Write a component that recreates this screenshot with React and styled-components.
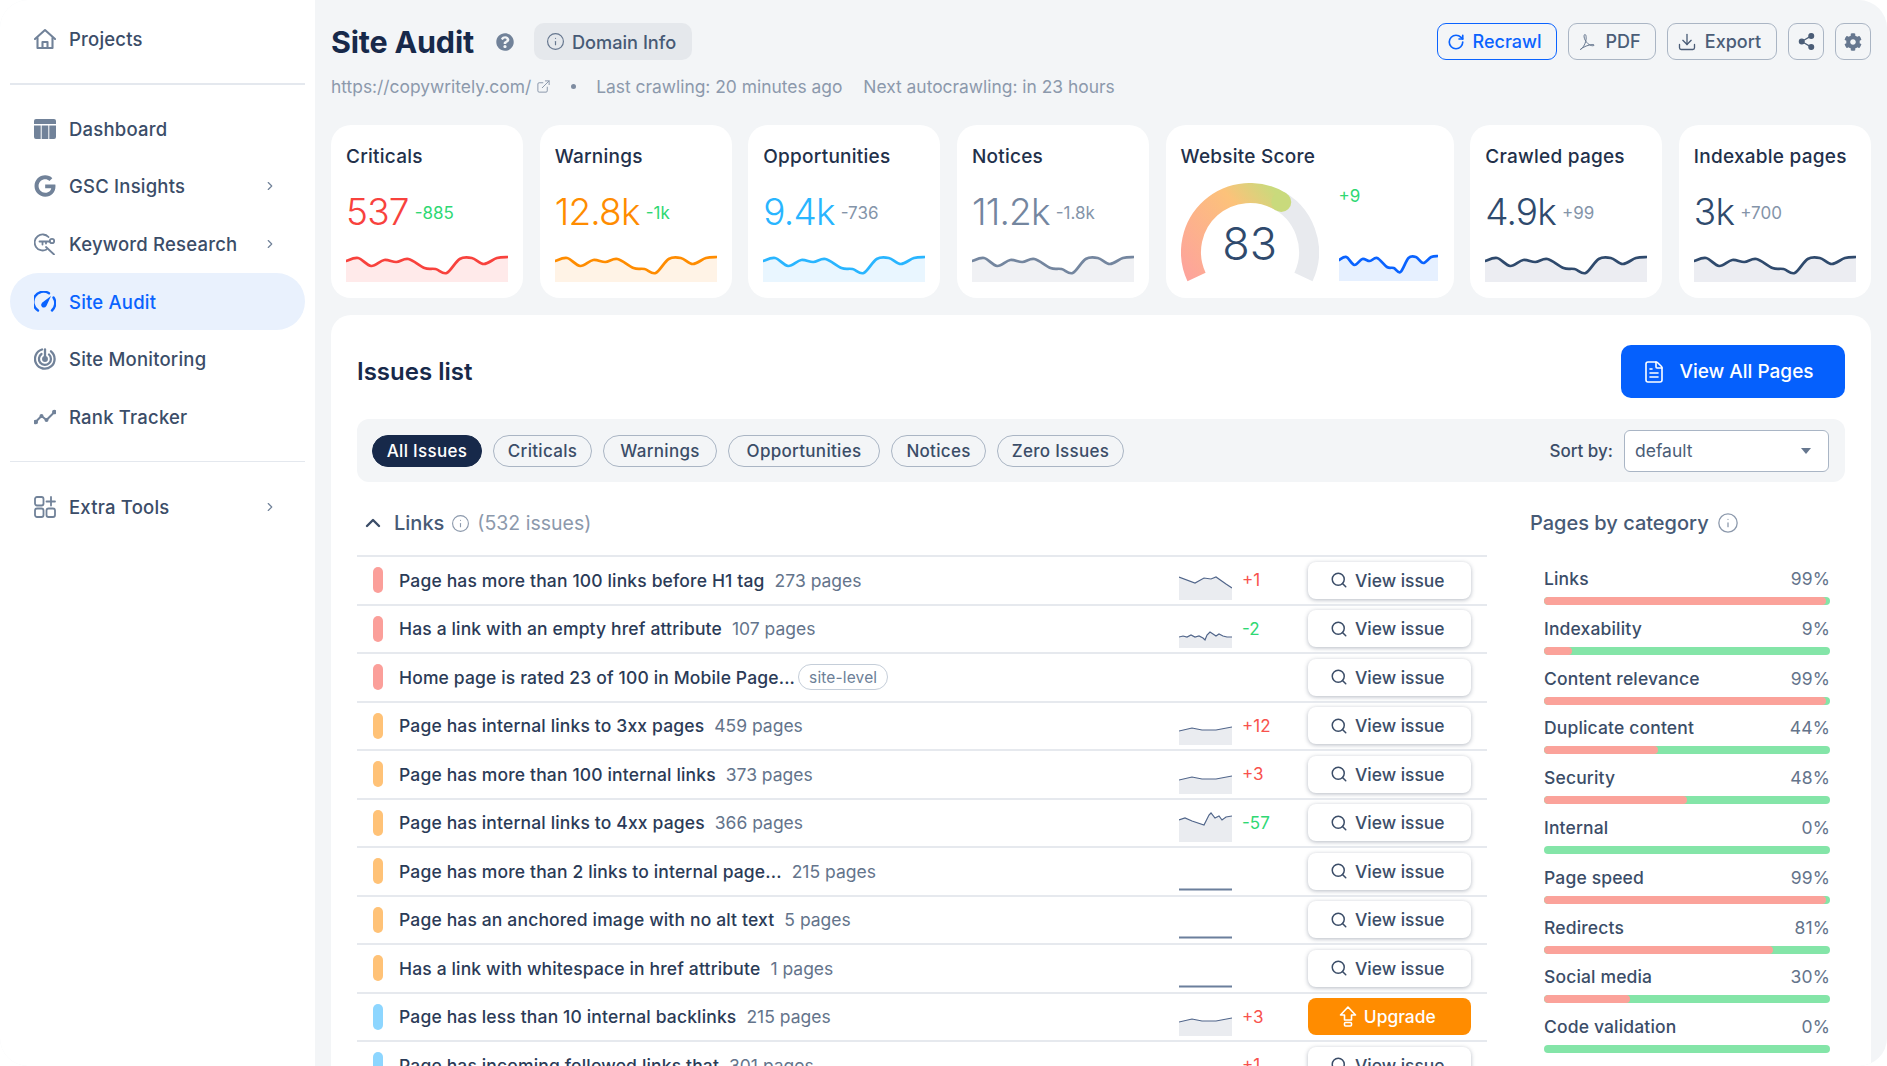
import React from 'react'
import styled, { createGlobalStyle } from 'styled-components'
import { ChevronRight, ChevronUp, RotateCw, Download, Share2, Search, Info, ExternalLink, FileText } from 'lucide-react'
import { FaGoogle, FaCog, FaQuestionCircle } from 'react-icons/fa'

const Global = createGlobalStyle`
  html, body { margin: 0; padding: 0; background: #fff; }
  body { font-family: Inter, "Open Sans", sans-serif; overflow: hidden; }
  * { box-sizing: border-box; }
`

const Window = styled.div`
  display: flex;
  width: 1887px;
  height: 1066px;
  overflow: hidden;
  background: #f3f5f7;
  border-radius: 28px;
`

const Sidebar = styled.aside`
  width: 315px;
  flex: none;
  background: #fff;
  padding: 10px 10px 0;
`

const NavItem = styled.div`
  display: flex;
  align-items: center;
  height: 57.7px;
  padding: 0 24px;
  border-radius: 29px;
  font-size: 18.5px;
  font-weight: 450;
  letter-spacing: 0.2px;
  color: ${p => (p.$active ? '#0a63ff' : '#3b4d68')};
  background: ${p => (p.$active ? '#e9f1fd' : 'transparent')};
  svg.lead { width: 22px; height: 22px; flex: none; margin-right: 13px; color: ${p => (p.$active ? '#0a63ff' : '#718299')}; }
  span { flex: 1; }
  svg.more { width: 14px; height: 14px; color: #718299; margin-right: 4px; }
`

const NavLine = styled.div`
  height: ${p => p.$h || 2}px;
  background: #e4e8ee;
  margin: ${p => p.$m};
`

const Main = styled.main`
  flex: 1;
  min-width: 0;
  padding: 23px 16px 0;
`

const TopBar = styled.div`
  display: flex;
  align-items: center;
  height: 37px;
`

const PageTitle = styled.h1`
  margin: 0 22px 0 0;
  font-size: 30.5px;
  font-weight: 700;
  color: #17294a;
  letter-spacing: -0.2px;
`

const DomainInfo = styled.div`
  display: flex;
  align-items: center;
  gap: 7px;
  width: 158px;
  height: 37px;
  margin-left: 20px;
  padding: 0 12px;
  border-radius: 10px;
  background: #e5e8ec;
  font-size: 18.2px;
  font-weight: 450;
  white-space: nowrap;
  color: #475a75;
`

const Actions = styled.div`
  display: flex;
  gap: 11px;
  margin-left: auto;
`

const ActionButton = styled.button`
  display: flex;
  align-items: center;
  justify-content: center;
  gap: 8px;
  height: 37px;
  width: ${p => p.$w}px;
  border-radius: 9px;
  background: transparent;
  font: 450 18px Inter, sans-serif;
  border: 1.5px solid ${p => (p.$blue ? '#0a63ff' : '#aab5c4')};
  color: ${p => (p.$blue ? '#0a63ff' : '#4b5d77')};
  padding: 0 6px 0 0;
`

const IconButton = styled(ActionButton)`
  width: 36px;
  padding: 0;
`

const MetaLine = styled.div`
  display: flex;
  align-items: center;
  height: 20px;
  margin: 16px 0 29px;
  font-size: 17.4px;
  color: #8c99ac;
`

const Dot = styled.i`
  width: 5px;
  height: 5px;
  border-radius: 50%;
  background: #7e8ca1;
  margin: 0 20px 0 20px;
`

const NextCrawl = styled.span`
  margin-left: 21px;
`

const StatGrid = styled.div`
  display: grid;
  grid-template-columns: repeat(4, 1fr) 1.5fr repeat(2, 1fr);
  gap: 16.5px;
  height: 173px;
  margin-bottom: 17px;
`

const Card = styled.section`
  position: relative;
  background: #fff;
  border-radius: 20px;
  padding: 20px 15px 0;
`

const CardTitle = styled.div`
  height: 24px;
  font-size: 19px;
  font-weight: 450;
  letter-spacing: 0.25px;
  line-height: 24px;
  white-space: nowrap;
  color: #22304a;
`

const ValueRow = styled.div`
  display: flex;
  align-items: center;
  height: 46px;
  margin-top: 20px;
  line-height: 46px;
`

const Value = styled.span`
  font-size: 37px;
  font-weight: 300;
  letter-spacing: -0.8px;
  color: ${p => p.$c};
`

const Delta = styled.span`
  font-size: 17px;
  font-weight: 400;
  margin: 2px 0 0 ${p => p.$ml ?? 6}px;
  color: ${p => p.$c};
`

const SparkBox = styled.div`
  margin-top: 19px;
`

const ScoreBody = styled.div`
  display: flex;
  margin-top: 14px;
`

const Gauge = styled.div`
  position: relative;
  width: 138px;
  height: 100px;
  flex: none;
  span {
    position: absolute;
    left: 0;
    right: 0;
    top: 34px;
    text-align: center;
    font-size: 45px;
    font-weight: 300;
    line-height: 54px;
    color: #2f4a6d;
  }
`

const ScoreSide = styled.div`
  margin-left: 20px;
  width: 99px;
  padding-top: 3px;
  svg { display: block; margin-top: 47px; }
`

const Panel = styled.section`
  background: #fff;
  border-radius: 20px 20px 0 0;
  padding: 30px 26px 0;
`

const PanelHead = styled.div`
  display: flex;
  align-items: center;
  justify-content: space-between;
  height: 53px;
  margin-bottom: 21px;
`

const PanelTitle = styled.h2`
  margin: 0;
  font-size: 24px;
  font-weight: 600;
  color: #17294a;
`

const PrimaryButton = styled.button`
  display: flex;
  align-items: center;
  justify-content: center;
  gap: 13px;
  width: 224px;
  height: 53px;
  padding: 0 10px 0 0;
  border: 0;
  border-radius: 10px;
  background: #0560fd;
  color: #fff;
  font: 500 19px Inter, sans-serif;
`

const FilterBar = styled.div`
  display: flex;
  align-items: center;
  gap: 11px;
  height: 63px;
  padding: 0 16px 0 15px;
  border-radius: 12px;
  background: #f3f5f7;
`

const Chip = styled.div`
  display: flex;
  align-items: center;
  justify-content: center;
  width: ${p => p.$w}px;
  height: 32px;
  border-radius: 16px;
  font-size: 17px;
  font-weight: 450;
  letter-spacing: 0.3px;
  border: 1.5px solid ${p => (p.$on ? '#17294a' : '#aab5c4')};
  background: ${p => (p.$on ? '#17294a' : 'transparent')};
  color: ${p => (p.$on ? '#fff' : '#3b4d68')};
`

const SortLabel = styled.span`
  margin-left: auto;
  font-size: 17px;
  font-weight: 450;
  color: #3b4d68;
`

const Select = styled.div`
  position: relative;
  display: flex;
  align-items: center;
  width: 205px;
  height: 42px;
  padding-left: 10px;
  border: 1.5px solid #a9b5c5;
  border-radius: 6px;
  background: #fff;
  font-size: 17.5px;
  color: #4b5d77;
  &::after {
    content: '';
    position: absolute;
    right: 17px;
    top: 17px;
    border: 5px solid transparent;
    border-top: 6px solid #66778f;
    border-bottom: 0;
  }
`

const Columns = styled.div`
  display: grid;
  grid-template-columns: 1130px 315px;
  column-gap: 43px;
  padding-top: 23px;
`

const GroupHead = styled.div`
  display: flex;
  align-items: center;
  height: 36px;
  margin-bottom: 14px;
  padding-left: 4px;
  font-size: 20px;
  font-weight: 450;
  color: #475a75;
  svg { flex: none; }
  em { font-style: normal; font-weight: 400; color: #8c99ac; font-size: 19.5px; }
`

const Row = styled.div`
  display: flex;
  align-items: center;
  height: 48.5px;
  padding-left: 16px;
  border-top: 2px solid #e6e9ee;
`

const Mark = styled.i`
  width: 10px;
  height: 26px;
  flex: none;
  border-radius: 5px;
  background: ${p => p.$c};
`

const IssueText = styled.div`
  flex: 1;
  display: flex;
  align-items: center;
  margin-left: 16px;
  font-size: 17.5px;
  font-weight: 450;
  letter-spacing: 0.15px;
  color: #2b3b57;
  white-space: nowrap;
`

const Pages = styled.span`
  margin-left: 10px;
  font-weight: 400;
  letter-spacing: 0;
  color: #64748b;
`

const Tag = styled.span`
  display: flex;
  align-items: center;
  height: 26px;
  margin-left: 3px;
  padding: 0 10px;
  border: 1px solid #c5ced9;
  border-radius: 13px;
  font-size: 15.5px;
  font-weight: 400;
  color: #6d7f97;
`

const Trend = styled.div`
  width: 53px;
  height: 100%;
  position: relative;
  flex: none;
  svg { position: absolute; left: 0; bottom: 4px; }
`

const TrendDelta = styled.span`
  width: 76px;
  padding-left: 10px;
  font-size: 17px;
  color: ${p => p.$c};
`

const RowButton = styled.button`
  display: flex;
  align-items: center;
  justify-content: center;
  gap: 7px;
  width: 162.5px;
  height: 37px;
  margin-right: 16.5px;
  padding: 0 4px 0 0;
  border: 0;
  border-radius: 8px;
  font: 450 17.4px Inter, sans-serif;
  background: ${p => (p.$up ? '#ff8c00' : '#fff')};
  color: ${p => (p.$up ? '#fff' : '#3b4d68')};
  box-shadow: ${p => (p.$up ? 'none' : '0 1px 4px rgba(40, 55, 80, 0.35)')};
`

const Category = styled.div`
  padding: 0 15px 0 14px;
  height: 49.8px;
`

const CategoryHead = styled(GroupHead)`
  padding-left: 0;
  gap: 8px;
  margin-bottom: 26px;
`

const CategoryLabel = styled.div`
  display: flex;
  justify-content: space-between;
  height: 24px;
  line-height: 24px;
  font-size: 17.5px;
  font-weight: 450;
  letter-spacing: 0.15px;
  color: #3b4d68;
  b { font-weight: 400; color: #64748b; }
`

const Track = styled.div`
  height: 8px;
  margin-top: 6px;
  border-radius: 4px;
  overflow: hidden;
  background: #84e5a8;
  i { display: block; height: 100%; background: #fba29a; border-radius: 4px; }
`

const smooth = pts => {
  let d = `M${pts[0][0]} ${pts[0][1]}`
  for (let i = 0; i < pts.length - 1; i++) {
    const a = pts[i - 1] || pts[i]
    const b = pts[i]
    const c = pts[i + 1]
    const e = pts[i + 2] || c
    d += `C${b[0] + (c[0] - a[0]) / 6} ${b[1] + (c[1] - a[1]) / 6} ${c[0] - (e[0] - b[0]) / 6} ${c[1] - (e[1] - b[1]) / 6} ${c[0]} ${c[1]}`
  }
  return d
}

const wave = [[0, 5], [12, 2], [25, 10], [38, 4], [50, 6], [62, 3], [78, 12], [89, 13], [100, 17], [113, 3], [125, 2], [137, 8], [150, 2], [161, 1]]

const Spark = ({ w = 162, color, fill }) => {
  const pts = wave.map(([x, y]) => [(x * w) / 161, y + 2])
  const line = smooth(pts)
  return (
    <svg width={w} height="28" viewBox={`0 0 ${w} 28`} style={{ display: 'block' }}>
      <path d={`${line}L${w} 28L0 28Z`} fill={fill} />
      <path d={line} fill="none" stroke={color} strokeWidth="2.7" strokeLinecap="round" />
    </svg>
  )
}

const rowSparks = {
  a: [[0, 1], [16, 7], [25, 2], [32, 3], [37, 1], [47, 8], [53, 12]],
  b: [[0, 13], [4, 12], [8, 13], [12, 11], [16, 13], [20, 12], [24, 14], [26, 16], [28, 11], [31, 8], [34, 10], [37, 12], [40, 10], [44, 12], [48, 13], [53, 13]],
  c: [[0, 10], [13, 7], [23, 9], [37, 9], [53, 6]],
  d: [[0, 8], [6, 6], [13, 9], [25, 13], [30, 3], [32, 1], [36, 6], [40, 4], [43, 8], [47, 5], [53, 4]],
}

const MiniSpark = ({ kind }) => {
  if (kind === 'flat') {
    return (
      <svg width="53" height="3" viewBox="0 0 53 3">
        <path d="M0 1.5H53" stroke="#6b7f9c" strokeWidth="2" />
      </svg>
    )
  }
  const pts = rowSparks[kind]
  const h = kind === 'd' ? 30 : 24
  const line = 'M' + pts.map(p => p.join(' ')).join('L')
  return (
    <svg width="53" height={h} viewBox={`0 0 53 ${h}`}>
      <path d={`${line}L53 ${h}L0 ${h}Z`} fill="#eaecf0" />
      <path d={line} fill="none" stroke="#50658a" strokeWidth="1.2" />
    </svg>
  )
}

const HomeIcon = () => (
  <svg className="lead" viewBox="0 0 22 22" fill="none" stroke="currentColor" strokeWidth="2.1" strokeLinecap="round" strokeLinejoin="round">
    <path d="M1 11L11 2l10 9" />
    <path d="M3.5 10v10h15V10" />
    <path d="M8.500 20v-6h5v6" />
  </svg>
)
const DashIcon = () => (
  <svg className="lead" viewBox="0 0 22 22" fill="currentColor">
    <path d="M0 3a2 2 0 0 1 2-2h18a2 2 0 0 1 2 2v3H0z" />
    <path d="M0 7.500h6.700V21H2a2 2 0 0 1-2-2zM7.700 7.500h6.600V21H7.700zM15.300 7.500H22V19a2 2 0 0 1-2 2h-4.700z" />
  </svg>
)
const KeywordIcon = () => (
  <svg className="lead" viewBox="0 0 22 22" fill="none" stroke="currentColor" strokeWidth="1.8" strokeLinecap="round">
    <path d="M14.500 4A8 8 0 1 0 12.500 16.500" />
    <circle cx="18" cy="8" r="2.200" />
    <path d="M5.500 8.500H15.500M8.500 8.500v3M12 8.500v2M12 14l8 7.500" />
  </svg>
)
const AuditIcon = () => (
  <svg className="lead" viewBox="0 0 22 22" fill="none" stroke="currentColor" strokeWidth="2.400" strokeLinecap="round">
    <path d="M4 19.500A10 10 0 0 1 15 2.300M19.500 6.500a10 10 0 0 1-1.500 13" />
    <path d="M8 16a3.300 3.300 0 0 1 0-4.300L17 5l-4.600 10a3.300 3.300 0 0 1-4.400 1z" fill="currentColor" stroke="none" />
  </svg>
)
const RadarIcon = () => (
  <svg className="lead" viewBox="0 0 22 22" fill="none" stroke="currentColor" strokeWidth="2.300" strokeLinecap="round">
    <path d="M8 1.500A9.800 9.800 0 1 0 17 3.300" />
    <path d="M7.500 6A6 6 0 1 0 15 6.500" />
    <path d="M11 1.500V11" />
    <circle cx="11" cy="11" r="1.800" fill="currentColor" />
  </svg>
)
const RankIcon = () => (
  <svg className="lead" viewBox="0 0 22 22" stroke="currentColor" strokeWidth="2" strokeLinecap="round" strokeLinejoin="round">
    <path d="M1.500 16l6-6 5 4 8-8" fill="none" />
    <circle cx="1.800" cy="16" r="1.300" fill="currentColor" />
    <circle cx="7.500" cy="10" r="1" fill="currentColor" />
    <circle cx="12.500" cy="14" r="1" fill="currentColor" />
    <circle cx="20.300" cy="6" r="1.300" fill="currentColor" />
  </svg>
)
const ToolsIcon = () => (
  <svg className="lead" viewBox="0 0 22 22" fill="none" stroke="currentColor" strokeWidth="1.800" strokeLinecap="round">
    <rect x="1" y="1" width="8.500" height="8.500" rx="2" />
    <rect x="1" y="12.500" width="8.500" height="8.500" rx="2" />
    <rect x="12.500" y="12.500" width="8.500" height="8.500" rx="2" />
    <path d="M17 1v8.500M12.500 5.500H21" />
  </svg>
)
const PdfIcon = () => (
  <svg width="20" height="20" viewBox="0 0 24 24" fill="none" stroke="#66778f" strokeWidth="1.200" strokeLinejoin="round">
    <path d="M4 21c3.500-2 7-8 7-14 0-2.500-.5-4-1.500-4S8 5 9 8c1.500 4 5.500 8.500 10 8.500 2 0 2-1.500 0-1.500-4.500 0-12 3-15 6z" />
  </svg>
)
const UpgradeIcon = () => (
  <svg width="18" height="22" viewBox="0 0 18 22" fill="none" stroke="#fff" strokeWidth="1.600" strokeLinejoin="round">
    <path d="M9 1l7.500 8H12.500v5h-7V9H1.500z" />
    <rect x="5.500" y="16.500" width="7" height="3.500" rx="1" />
  </svg>
)

const GaugeArc = () => {
  const c = 69
  const r = 59
  const pt = deg => {
    const a = (deg * Math.PI) / 180
    return `${c + r * Math.sin(a)} ${c - r * Math.cos(a)}`
  }
  return (
    <svg width="138" height="100" viewBox="0 0 138 100">
      <defs>
        <linearGradient id="score" gradientUnits="userSpaceOnUse" x1="8" y1="98" x2="104" y2="20">
          <stop offset="0" stopColor="#fda39c" />
          <stop offset="0.68" stopColor="#fcc27a" />
          <stop offset="1" stopColor="#c9da7c" />
        </linearGradient>
      </defs>
      <path d={`M${pt(25)}A${r} ${r} 0 0 1 ${pt(115)}`} fill="none" stroke="#e8eaee" strokeWidth="20" />
      <path d={`M${pt(-115)}A${r} ${r} 0 0 1 ${pt(32)}`} fill="none" stroke="url(#score)" strokeWidth="20" />
      <circle cx={c + r * Math.sin((32 * Math.PI) / 180)} cy={c - r * Math.cos((32 * Math.PI) / 180)} r="10" fill="#c9da7c" />
    </svg>
  )
}

const nav = [
  { label: 'Dashboard', icon: <DashIcon /> },
  { label: 'GSC Insights', icon: <FaGoogle className="lead" />, more: true },
  { label: 'Keyword Research', icon: <KeywordIcon />, more: true },
  { label: 'Site Audit', icon: <AuditIcon />, active: true },
  { label: 'Site Monitoring', icon: <RadarIcon /> },
  { label: 'Rank Tracker', icon: <RankIcon /> },
]

const stats = [
  { title: 'Criticals', value: '537', delta: '-885', color: '#f8423d', dc: '#2fd873', fill: '#ffeaea' },
  { title: 'Warnings', value: '12.8k', delta: '-1k', color: '#ff8c00', dc: '#2fd873', fill: '#fff3e6' },
  { title: 'Opportunities', value: '9.4k', delta: '-736', color: '#29b5ff', dc: '#8494a9', fill: '#e9f6ff' },
  { title: 'Notices', value: '11.2k', delta: '-1.8k', color: '#74869f', dc: '#8494a9', fill: '#f0f1f4' },
]
const stats2 = [
  { title: 'Crawled pages', value: '4.9k', delta: '+99', color: '#2f4a6d', dc: '#8494a9', fill: '#ecedf2' },
  { title: 'Indexable pages', value: '3k', delta: '+700', color: '#2f4a6d', dc: '#8494a9', fill: '#ecedf2' },
]

const RED = '#fb9f9a'
const ORANGE = '#ffc277'
const BLUE = '#8dd6ff'
const UP = '#f8524d'
const DOWN = '#2fd873'

const issues = [
  { mark: RED, text: 'Page has more than 100 links before H1 tag', pages: '273 pages', spark: 'a', delta: '+1', dc: UP },
  { mark: RED, text: 'Has a link with an empty href attribute', pages: '107 pages', spark: 'b', delta: '-2', dc: DOWN },
  { mark: RED, text: 'Home page is rated 23 of 100 in Mobile Page...', tag: 'site-level' },
  { mark: ORANGE, text: 'Page has internal links to 3xx pages', pages: '459 pages', spark: 'c', delta: '+12', dc: UP },
  { mark: ORANGE, text: 'Page has more than 100 internal links', pages: '373 pages', spark: 'c', delta: '+3', dc: UP },
  { mark: ORANGE, text: 'Page has internal links to 4xx pages', pages: '366 pages', spark: 'd', delta: '-57', dc: DOWN },
  { mark: ORANGE, text: 'Page has more than 2 links to internal page...', pages: '215 pages', spark: 'flat' },
  { mark: ORANGE, text: 'Page has an anchored image with no alt text', pages: '5 pages', spark: 'flat' },
  { mark: ORANGE, text: 'Has a link with whitespace in href attribute', pages: '1 pages', spark: 'flat' },
  { mark: BLUE, text: 'Page has less than 10 internal backlinks', pages: '215 pages', spark: 'c', delta: '+3', dc: UP, upgrade: true },
  { mark: BLUE, text: 'Page has incoming followed links that', pages: '301 pages', spark: 'c', delta: '+1', dc: UP },
]

// name, shown percent, width of the red part
const categories = [
  ['Links', 99, 98.5], ['Indexability', 9, 9.7], ['Content relevance', 99, 98.5], ['Duplicate content', 44, 40], ['Security', 48, 50],
  ['Internal', 0, 0], ['Page speed', 99, 98.5], ['Redirects', 81, 80], ['Social media', 30, 30], ['Code validation', 0, 0],
]

const filters = [
  ['All Issues', 110], ['Criticals', 99], ['Warnings', 114], ['Opportunities', 152], ['Notices', 95], ['Zero Issues', 127],
]

const StatCard = ({ s }) => (
  <Card>
    <CardTitle>{s.title}</CardTitle>
    <ValueRow>
      <Value $c={s.color}>{s.value}</Value>
      <Delta $c={s.dc}>{s.delta}</Delta>
    </ValueRow>
    <SparkBox>
      <Spark color={s.color} fill={s.fill} />
    </SparkBox>
  </Card>
)

export default function App() {
  return (
    <>
      <Global />
      <Window>
        <Sidebar>
          <NavItem>
            <HomeIcon />
            <span>Projects</span>
          </NavItem>
          <NavLine $m="15px 0 15px" />
          {nav.map(n => (
            <NavItem key={n.label} $active={n.active}>
              {n.icon}
              <span>{n.label}</span>
              {n.more && <ChevronRight className="more" strokeWidth={2} />}
            </NavItem>
          ))}
          <NavLine $h={1.5} $m="15px 0 16px" />
          <NavItem>
            <ToolsIcon />
            <span>Extra Tools</span>
            <ChevronRight className="more" strokeWidth={2} />
          </NavItem>
        </Sidebar>
        <Main>
          <TopBar>
            <PageTitle>Site Audit</PageTitle>
            <FaQuestionCircle size={18} color="#718299" />
            <DomainInfo>
              <Info size={19} strokeWidth={1.5} color="#66778f" />
              Domain Info
            </DomainInfo>
            <Actions>
              <ActionButton $blue $w={120}>
                <RotateCw size={18} strokeWidth={2.2} />
                Recrawl
              </ActionButton>
              <ActionButton $w={88}>
                <PdfIcon />
                PDF
              </ActionButton>
              <ActionButton $w={110}>
                <Download size={20} strokeWidth={1.6} />
                Export
              </ActionButton>
              <IconButton>
                <Share2 size={19} strokeWidth={1.6} fill="currentColor" />
              </IconButton>
              <IconButton>
                <FaCog size={18} color="#66778f" />
              </IconButton>
            </Actions>
          </TopBar>
          <MetaLine>
            https://copywritely.com/
            <ExternalLink size={15} strokeWidth={1.6} style={{ marginLeft: 5 }} />
            <Dot />
            Last crawling: 20 minutes ago
            <NextCrawl>Next autocrawling: in 23 hours</NextCrawl>
          </MetaLine>
          <StatGrid>
            {stats.map(s => <StatCard key={s.title} s={s} />)}
            <Card>
              <CardTitle>Website Score</CardTitle>
              <ScoreBody>
                <Gauge>
                  <GaugeArc />
                  <span>83</span>
                </Gauge>
                <ScoreSide>
                  <Delta $c="#2fd873" $ml={0}>+9</Delta>
                  <Spark w={99} color="#0a63ff" fill="#e6f0ff" />
                </ScoreSide>
              </ScoreBody>
            </Card>
            {stats2.map(s => <StatCard key={s.title} s={s} />)}
          </StatGrid>
          <Panel>
            <PanelHead>
              <PanelTitle>Issues list</PanelTitle>
              <PrimaryButton>
                <FileText size={24} strokeWidth={1.6} />
                View All Pages
              </PrimaryButton>
            </PanelHead>
            <FilterBar>
              {filters.map(([f, w], i) => (
                <Chip key={f} $w={w} $on={i === 0}>{f}</Chip>
              ))}
              <SortLabel>Sort by:</SortLabel>
              <Select>default</Select>
            </FilterBar>
            <Columns>
              <div>
                <GroupHead>
                  <ChevronUp size={24} strokeWidth={2.4} color="#3b4d68" style={{ marginRight: 9 }} />
                  Links
                  <Info size={19} strokeWidth={1.4} color="#8c99ac" style={{ margin: '0 7px 0 7px' }} />
                  <em>(532 issues)</em>
                </GroupHead>
                {issues.map(it => (
                  <Row key={it.text}>
                    <Mark $c={it.mark} />
                    <IssueText>
                      {it.text}
                      {it.pages && <Pages>{it.pages}</Pages>}
                      {it.tag && <Tag>{it.tag}</Tag>}
                    </IssueText>
                    <Trend>{it.spark && <MiniSpark kind={it.spark} />}</Trend>
                    <TrendDelta $c={it.dc}>{it.delta}</TrendDelta>
                    <RowButton $up={it.upgrade}>
                      {it.upgrade ? <UpgradeIcon /> : <Search size={18} strokeWidth={2} />}
                      {it.upgrade ? 'Upgrade' : 'View issue'}
                    </RowButton>
                  </Row>
                ))}
              </div>
              <div>
                <CategoryHead>
                  Pages by category
                  <Info size={22} strokeWidth={1.4} color="#8c99ac" />
                </CategoryHead>
                {categories.map(([name, pct, bar]) => (
                  <Category key={name}>
                    <CategoryLabel>
                      {name}
                      <b>{pct}%</b>
                    </CategoryLabel>
                    <Track>
                      <i style={{ width: `${bar}%` }} />
                    </Track>
                  </Category>
                ))}
              </div>
            </Columns>
          </Panel>
        </Main>
      </Window>
    </>
  )
}
